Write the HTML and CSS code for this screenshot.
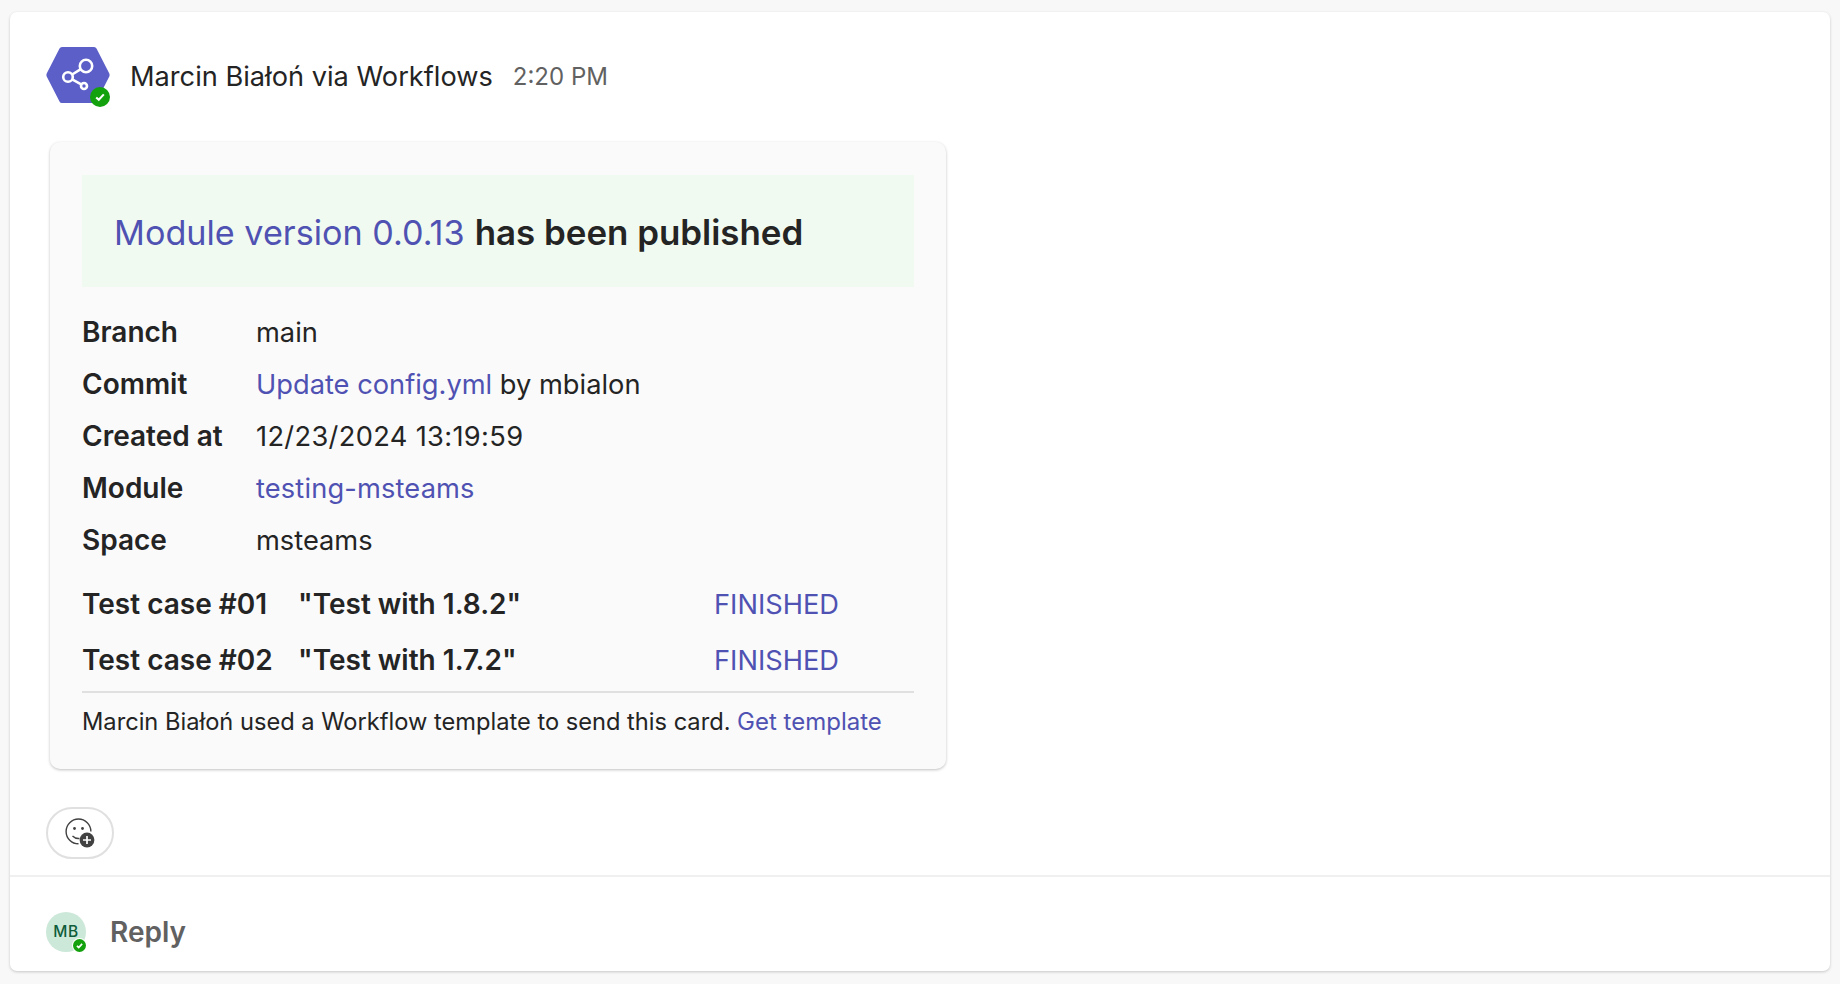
FILE: index.html
```html
<!DOCTYPE html>
<html lang="en">
<head>
<meta charset="utf-8">
<title>Workflow message</title>
<link rel="stylesheet" href="styles.css">
</head>
<body>
<main class="thread">
  <section class="message">
    <header class="msg-head">
      <div class="avatar">
        <svg class="hex" viewBox="0 0 64 56" width="64" height="56">
          <path d="M13.5 1.5Q14.2 0 16 0H48Q49.8 0 50.5 1.5L63.3 26.5Q64 28 63.3 29.5L50.5 54.5Q49.8 56 48 56H16Q14.2 56 13.5 54.5L.7 29.5Q0 28 .7 26.5Z" fill="#5b5fc7"/>
          <g fill="none" stroke="#fff" stroke-width="2.6">
            <circle cx="40" cy="19" r="6.2"/>
            <circle cx="22" cy="30" r="4.8"/>
            <circle cx="38" cy="39" r="3"/>
            <path d="M26.2 27.5L34.8 22.2M26.2 32.4L35.2 37.4"/>
          </g>
        </svg>
        <span class="status big"><svg viewBox="0 0 20 20"><path d="M6.2 10.4L8.8 12.8L13.8 7.4" fill="none" stroke="#fff" stroke-width="2.1"/></svg></span>
      </div>
      <span class="sender">Marcin Białoń via Workflows</span>
      <time class="time">2:20 PM</time>
    </header>
    <article class="card">
      <h1 class="banner"><a class="link">Module version 0.0.13</a> <b>has been published</b></h1>
      <dl class="facts">
        <div class="fact"><dt>Branch</dt><dd>main</dd></div>
        <div class="fact"><dt>Commit</dt><dd><a class="link">Update config.yml</a> by mbialon</dd></div>
        <div class="fact"><dt>Created at</dt><dd class="date">12/23/2024 13:19:59</dd></div>
        <div class="fact"><dt>Module</dt><dd><a class="link slug">testing-msteams</a></dd></div>
        <div class="fact"><dt>Space</dt><dd>msteams</dd></div>
      </dl>
      <div class="tests">
        <div class="test"><b class="t-id">Test case #01</b><b class="t-name">"Test with 1.8.2"</b><a class="link">FINISHED</a></div>
        <div class="test"><b class="t-id">Test case #02</b><b class="t-name">"Test with 1.7.2"</b><a class="link">FINISHED</a></div>
      </div>
      <footer class="card-foot">Marcin Białoń used a Workflow template to send this card. <a class="link">Get template</a></footer>
    </article>
    <button class="react" aria-label="Add reaction">
      <svg viewBox="0 0 30 30" width="30" height="30">
        <path d="M13.5 25.8A12.4 12.4 0 1 1 25.9 13.4" fill="none" stroke="#424242" stroke-width="1.4"/>
        <circle cx="9.5" cy="10.5" r="1.4" fill="#424242"/><circle cx="17.5" cy="10.5" r="1.4" fill="#424242"/>
        <path d="M7.5 18Q10.5 21 14.5 20.5" fill="none" stroke="#424242" stroke-width="1.4"/>
        <circle cx="22" cy="22" r="7.4" fill="#424242"/>
        <path d="M22 18V26M18 22H26" stroke="#fff" stroke-width="1.7"/>
      </svg>
    </button>
  </section>
  <section class="reply">
    <div class="me">MB<span class="status small"><svg viewBox="0 0 20 20"><path d="M6 10.4L8.8 13L14 7.4" fill="none" stroke="#fff" stroke-width="2.6"/></svg></span></div>
    <span class="reply-text">Reply</span>
  </section>
</main>
</body>
</html>
```
FILE: styles.css
```css
* { box-sizing: border-box; }
html, body { margin: 0; height: 100%; }
body {
  background: #f8f8f8;
  padding: 12px 10px 13px 10px;
  font-family: Inter, "Noto Sans", sans-serif;
  color: #242424;
  overflow: hidden;
}
.thread {
  height: 959px;
  background: #fff;
  border-radius: 7px;
  box-shadow: 0 1px 3px rgba(0,0,0,.2);
  display: flex;
  flex-direction: column;
}
.message { padding: 35px 36px 0; height: 865px; border-bottom: 2px solid #f0f0f0; }
.msg-head { display: flex; align-items: center; height: 56px; padding-top: 3px; }
.avatar { position: relative; width: 64px; height: 56px; flex: none; margin-top: -3px; }
.hex { display: block; }
.status {
  position: absolute;
  border-radius: 50%;
  background: #13a10e;
  display: flex;
}
.status svg { width: 100%; height: 100%; }
.status.big { width: 20px; height: 20px; right: 0; bottom: -4px; }
.status.small { width: 13px; height: 13px; right: 0; bottom: 0; box-shadow: 0 0 0 1px #fff; }
.sender { margin-left: 20px; font-size: 27.2px; }
.time { margin-left: 20px; font-size: 24px; color: #616161; }
.card {
  margin: 39px 0 0 4px;
  width: 896px;
  height: 627px;
  background: #fafafa;
  border-radius: 10px;
  box-shadow: 0 1px 3px rgba(0,0,0,.25);
  padding: 33px 32px 0 32px;
}
.link { color: #4f52b2; font-weight: 400; }
.banner {
  margin: 0;
  height: 112px;
  background: #f1faf1;
  padding: 2px 32px 0;
  display: flex;
  align-items: baseline;
  line-height: 110px;
  gap: 10px;
  font-size: 34.2px;
  font-weight: 400;
}
.banner b { font-weight: 600; font-size: 34.9px; }
.facts { margin: 19px 0 0; }
.fact { display: flex; align-items: center; height: 52px; font-size: 27.25px; }
.fact dt { width: 174px; font-weight: 600; font-size: 28px; }
.fact dd { margin: 0; }
.fact .date { letter-spacing: .33px; }
.fact .slug { letter-spacing: .15px; }
.tests { margin-top: 10px; }
.test { display: flex; align-items: center; height: 56px; font-size: 28px; }
.test b { font-weight: 600; }
.test .link { font-size: 27.25px; }
.t-id { width: 216px; }
.t-name { width: 416px; }
.card-foot {
  margin-top: 3px;
  border-top: 2px solid #e0e0e0;
  padding-top: 14px;
  font-size: 23.65px;
}
.card-foot .link { font-size: 24px; }
.react {
  display: flex;
  align-items: center;
  justify-content: center;
  margin-top: 38px;
  width: 68px;
  height: 52px;
  background: #fff;
  border: 2px solid #e0e0e0;
  border-radius: 26px;
  padding: 0;
}
.reply { display: flex; align-items: center; padding: 15px 36px 0; flex: 1; }
.me {
  position: relative;
  width: 40px;
  height: 40px;
  border-radius: 50%;
  background: #cce8d9;
  color: #0e5c3a;
  font-size: 15.5px;
  font-weight: 500;
  letter-spacing: .5px;
  display: flex;
  align-items: center;
  justify-content: center;
}
.reply-text { margin-left: 24px; font-size: 28px; font-weight: 600; color: #616161; }
```
